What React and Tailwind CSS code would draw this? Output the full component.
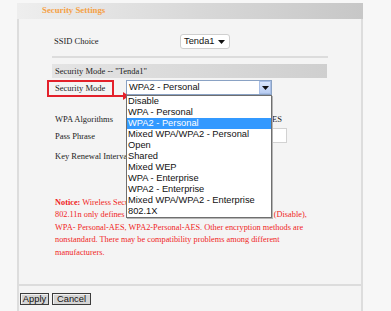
import React from "react";

const modes = [
  "Disable",
  "WPA - Personal",
  "WPA2 - Personal",
  "Mixed WPA/WPA2 - Personal",
  "Open",
  "Shared",
  "Mixed WEP",
  "WPA - Enterprise",
  "WPA2 - Enterprise",
  "Mixed WPA/WPA2 - Enterprise",
  "802.1X",
];

function Caret({ className }) {
  return (
    <svg width="7" height="4" viewBox="0 0 7 4" className={className}>
      <path d="M0 0h7L3.5 4z" fill="#111" />
    </svg>
  );
}

export default function App() {
  return (
    <div className="relative w-[391px] h-[311px] overflow-hidden bg-[#f7f7f7] pt-[3px] font-['Liberation_Serif',serif] text-[#222]">
      {/* header */}
      <div className="ml-[17px] w-[346px] h-[16px] bg-gradient-to-r from-[#eeeeee] via-[#d9d9d9] to-[#c7c7c7] flex items-center pl-[25px]">
        <span className="text-[8.8px] font-bold text-[#f5a145]">Security Settings</span>
      </div>

      {/* body */}
      <div className="ml-[17px] w-[346px] h-[292px] border-x-2 border-[#dddddd] bg-[#f4f4f4] flex flex-col">
        <div className="mt-[15px] flex items-center h-[15px]">
          <span className="ml-[35px] w-[126px] text-[8.5px]">SSID Choice</span>
          <div className="w-[50px] h-[15px] bg-white border border-[#cfcfcf] rounded-[3px] flex items-center justify-between pl-[3px] pr-[4px]">
            <span className="font-['Liberation_Sans',sans-serif] text-[9.3px] text-[#111]">Tenda1</span>
            <Caret />
          </div>
        </div>

        <div className="mt-[7px] ml-[33px] w-[276px] h-[2px] bg-[#dcdcdc]" />

        <div className="mt-[6px] ml-[33px] w-[275px] h-[14px] bg-gradient-to-r from-[#e4e4e4] to-[#cfcfcf] flex items-center pl-[3px]">
          <span className="text-[8.5px]">Security Mode -- "Tenda1"</span>
        </div>

        <div className="mt-[2px] flex items-start h-[17px]">
          <div className="ml-[28px] w-[67px] h-[17px] border-2 border-[#e3212b] flex items-center pl-[6px]">
            <span className="text-[8.5px] whitespace-nowrap">Security Mode</span>
          </div>
          <div className="ml-[12px] w-[146px] h-[15px] bg-white border border-[#8aa2c4] flex items-center justify-between pl-[2px]">
            <span className="font-['Liberation_Sans',sans-serif] text-[9.3px] text-[#111]">WPA2 - Personal</span>
            <div className="w-[12px] h-[13px] bg-gradient-to-b from-[#dbe7fb] to-[#b9cdf2] border border-[#a9bfe6] flex items-center justify-center">
              <Caret />
            </div>
          </div>
        </div>

        <div className="mt-[15px] flex items-center h-[14px]">
          <span className="ml-[36px] w-[71px] text-[8.5px]">WPA Algorithms</span>
          <span className="w-[156px] text-right text-[8.5px] whitespace-nowrap">AES TKIP TKIP&amp;AES</span>
        </div>

        <div className="mt-[2px] flex items-center h-[15px]">
          <span className="ml-[36px] w-[71px] pt-[2px] text-[8.5px]">Pass Phrase</span>
          <div className="w-[161px] h-[15px] bg-white border border-[#d2d2d2]" />
        </div>

        <div className="mt-[6px] flex items-center h-[14px]">
          <span className="ml-[36px] w-[71px] text-[8.5px] whitespace-nowrap">Key Renewal Interval</span>
          <div className="w-[50px] h-[14px] bg-white border border-[#d2d2d2]" />
        </div>

        <div className="mt-[34px] ml-[36px] text-[8.3px] leading-[12.4px] text-[#f01e1e] whitespace-nowrap">
          <div>
            <b>Notice:</b> Wireless Security Mode:
          </div>
          <div>802.11n only defines the three encryption methods, namely None (Disable),</div>
          <div>WPA- Personal-AES, WPA2-Personal-AES. Other encryption methods are</div>
          <div>nonstandard. There may be compatibility problems among different</div>
          <div>manufacturers.</div>
        </div>

        <div className="mt-auto mb-[25px] h-[2px] bg-[#dcdcdc]" />
      </div>

      {/* buttons */}
      <div className="absolute left-[20px] top-[293px] flex gap-[3px] font-['Liberation_Sans',sans-serif] text-[9.3px] text-[#111]">
        <button className="w-[29px] h-[12px] leading-[10px] bg-[#d5d5d5] border border-[#3c3c3c] shadow-[inset_1px_1px_0_#f2f2f2]">Apply</button>
        <button className="w-[39px] h-[12px] leading-[10px] bg-[#d5d5d5] border border-[#3c3c3c] shadow-[inset_1px_1px_0_#f2f2f2]">Cancel</button>
      </div>

      {/* red arrow */}
      <svg className="absolute left-[113px] top-[91px]" width="18" height="10" viewBox="0 0 18 10">
        <path d="M0 5h11" stroke="#e3212b" strokeWidth="2" />
        <path d="M10 1l6 4-6 4z" fill="#e3212b" />
      </svg>

      {/* open dropdown list */}
      <div className="absolute left-[126px] top-[95px] w-[146px] h-[123px] bg-white border border-[#6f6f6f] shadow-[1px_1px_0_#b5b5b5] font-['Liberation_Sans',sans-serif] text-[9.3px] text-[#111]">
        {modes.map((m, i) => (
          <div
            key={m}
            className={
              i === 2
                ? "h-[11px] leading-[11px] pl-[1px] bg-[#3399ff] text-white whitespace-nowrap"
                : "h-[11px] leading-[11px] pl-[1px] whitespace-nowrap"
            }
          >
            {m}
          </div>
        ))}
      </div>
    </div>
  );
}
